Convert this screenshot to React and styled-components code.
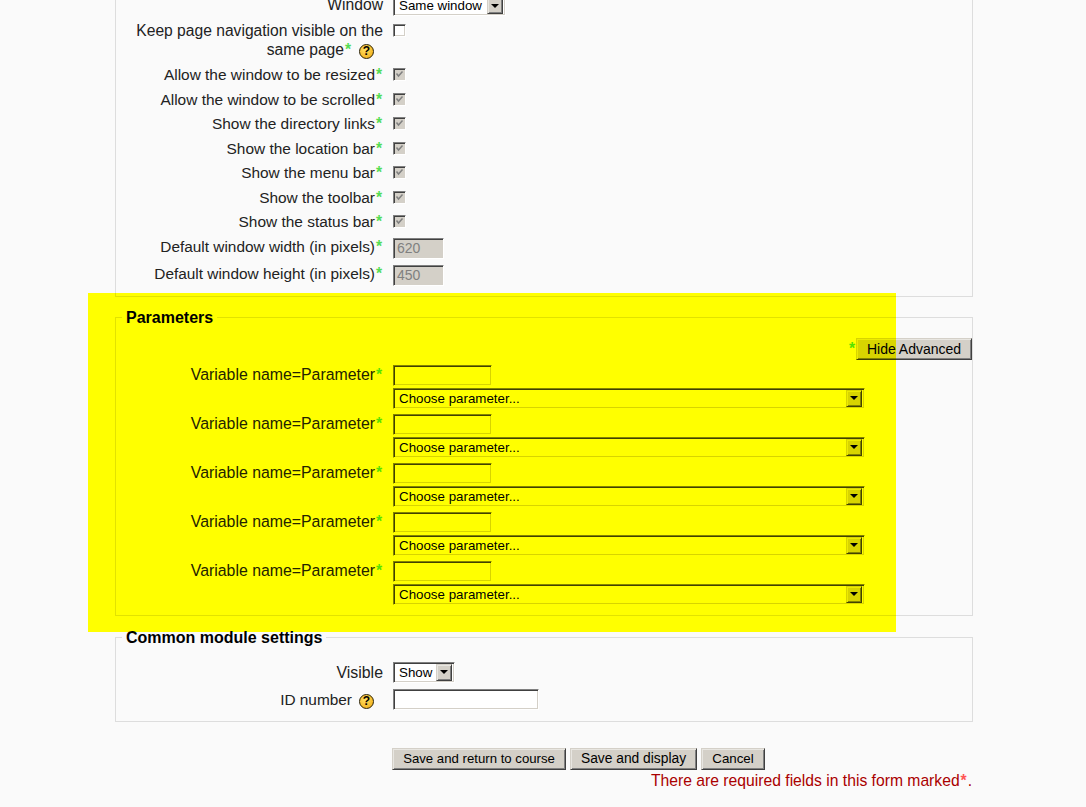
import React from 'react';
import styled, { createGlobalStyle, css } from 'styled-components';

const GlobalStyle = createGlobalStyle`
  html, body {
    margin: 0;
    padding: 0;
    background: #fafafa;
  }
  body {
    font-family: "Liberation Sans", Arial, sans-serif;
    font-size: 15.7px;
    line-height: 19px;
    color: #222;
  }
`;

const sunken = css`
  border: 1px solid;
  border-color: #808080 #fff #fff #808080;
  box-shadow: inset 1px 1px 0 #404040, inset -1px -1px 0 #d4d0c8;
`;

const raised = css`
  border: 1px solid;
  border-color: #d4d0c8 #404040 #404040 #d4d0c8;
  box-shadow: inset 1px 1px 0 #e8e6e1, inset -1px -1px 0 #808080;
  background: #d4d0c8;
`;

const Page = styled.div`
  position: relative;
  height: 807px;
  overflow: hidden;
`;

const highlightBox = css`
  position: absolute;
  left: 88px;
  top: 293px;
  width: 808px;
  height: 339px;
  pointer-events: none;
`;

/* lifts the off-white page to pure white so the marker comes out as pure yellow */
const HighlightLift = styled.div`
  ${highlightBox}
  backdrop-filter: brightness(1.0204);
`;

const Highlight = styled.div`
  ${highlightBox}
  background: #ffff00;
  mix-blend-mode: multiply;
`;

const Form = styled.form`
  width: 858px;
  margin: 0 0 0 115px;
`;

const Fieldset = styled.fieldset`
  margin: ${p => p.$margin || '0'};
  padding: ${p => p.$padding || '0'};
  border: 1px solid #dddddd;
  min-width: 0;
`;

const Legend = styled.legend`
  margin-left: 6px;
  padding: 0 4px;
  font-size: 16px;
  font-weight: bold;
  color: #000;
`;

const Row = styled.div`
  display: grid;
  grid-template-columns: 257px 1fr;
  column-gap: 10px;
  padding-left: 10px;
  height: ${p => p.$height}px;
`;

const Label = styled.label`
  text-align: right;
  padding-top: ${p => p.$top || 0}px;
  font-size: ${p => p.$size || 15.7}px;
`;

const Star = styled.span`
  display: inline-block;
  width: 8px;
  text-align: center;
  color: #55dd55;
  font-size: 15.7px;
  font-weight: bold;
`;

const Help = styled.span`
  display: inline-block;
  box-sizing: border-box;
  width: 15px;
  height: 15px;
  margin: 0 9px 0 7px;
  border: 1px solid #2a2000;
  border-radius: 50%;
  background: radial-gradient(circle at 40% 35%, #ffdf60, #f0a810);
  color: #000;
  font-size: 12px;
  font-weight: bold;
  line-height: 13px;
  text-align: center;
  vertical-align: 0;
`;

const Field = styled.div`
  display: flex;
  flex-direction: column;
  align-items: flex-start;
  gap: 2px;
  padding-top: ${p => p.$top || 0}px;
`;

const TextInput = styled.input`
  ${sunken}
  box-sizing: border-box;
  display: block;
  width: ${p => p.$width}px;
  height: ${p => p.$height || 21}px;
  padding: 1px 3px;
  outline: none;
  border-radius: 0;
  background: ${p => (p.disabled ? '#d4d0c8' : '#fff')};
  color: #808080;
  font: 14px "Liberation Sans", Arial, sans-serif;
`;

const Select = styled.div`
  ${sunken}
  box-sizing: border-box;
  display: flex;
  align-items: center;
  justify-content: space-between;
  width: ${p => p.$width}px;
  height: 21px;
  padding: 0 2px 0 5px;
  background: #fff;
  color: #000;
  font-size: 13.33px;
`;

const SelectArrow = styled.span`
  ${raised}
  box-sizing: border-box;
  display: flex;
  align-items: center;
  justify-content: center;
  width: 16px;
  height: 17px;

  &::after {
    content: '';
    border: 4px solid transparent;
    border-top: 4px solid #000;
    border-bottom: 0;
  }
`;

const Box = styled.span`
  ${sunken}
  box-sizing: border-box;
  display: block;
  width: 13px;
  height: 13px;
  margin-top: ${p => p.$top || 0}px;
  background: ${p => (p.$disabled ? '#d4d0c8' : '#fff')};

  svg {
    display: block;
    margin: 1px 0 0 1px;
  }
`;

const Button = styled.button`
  ${raised}
  box-sizing: border-box;
  width: ${p => p.$width}px;
  height: 22px;
  padding: 0;
  border-radius: 0;
  color: #000;
  font: ${p => p.$size || 13.33}px "Liberation Sans", Arial, sans-serif;
  white-space: nowrap;
`;

const AdvancedBar = styled.div`
  display: flex;
  justify-content: flex-end;
  align-items: center;
  margin: 11px 0 4px;
`;

const Actions = styled.div`
  display: flex;
  gap: 4px;
  margin: 26px 0 0 277px;
`;

const RequiredNote = styled.div`
  text-align: right;
  color: #aa0000;
  margin-top: 1.5px;
  padding-right: 1px;

  ${Star} {
    color: #ff5555;
  }
`;

const Spacer = styled.div`
  height: ${p => p.$height}px;
`;

const CheckBox = ({ checked, top }) => (
  <Box $disabled={checked} $top={top}>
    {checked && (
      <svg width="9" height="9" viewBox="0 0 9 9">
        <path d="M1.5 3.5 L3.5 6 L7.5 1.5" fill="none" stroke="#808080" strokeWidth="1.5" />
      </svg>
    )}
  </Box>
);

const checkRows = [
  'Allow the window to be resized',
  'Allow the window to be scrolled',
  'Show the directory links',
  'Show the location bar',
  'Show the menu bar',
  'Show the toolbar',
  'Show the status bar',
];

const params = [1, 2, 3, 4, 5];

export default function App() {
  return (
    <Page>
      <GlobalStyle />
      <Form onSubmit={e => e.preventDefault()}>
        <Fieldset $margin="-31px 0 0" $padding="25px 0 0">
          <Row $height={26}>
            <Label>Window</Label>
            <Field>
              <Select $width={113}>
                Same window
                <SelectArrow />
              </Select>
            </Field>
          </Row>
          <Row $height={44}>
            <Label $size={15.64}>
              Keep page navigation visible on the same page<Star>*</Star>
              <Help>?</Help>
            </Label>
            <Field $top={3}>
              <CheckBox />
            </Field>
          </Row>
          {checkRows.map(text => (
            <Row $height={24.5} key={text}>
              <Label $size={15.45}>
                {text}
                <Star>*</Star>
              </Label>
              <Field $top={3}>
                <CheckBox checked />
              </Field>
            </Row>
          ))}
          <Row $height={27}>
            <Label $size={15.4}>
              Default window width (in pixels)<Star>*</Star>
            </Label>
            <Field $top={1}>
              <TextInput $width={51} disabled value="620" readOnly />
            </Field>
          </Row>
          <Row $height={32}>
            <Label $size={15.4}>
              Default window height (in pixels)<Star>*</Star>
            </Label>
            <Field $top={1}>
              <TextInput $width={51} disabled value="450" readOnly />
            </Field>
          </Row>
        </Fieldset>

        <Fieldset $margin="11px 0 0">
          <Legend>Parameters</Legend>
          <AdvancedBar>
            <Star>*</Star>
            <Button $width={116} $size={14}>Hide Advanced</Button>
          </AdvancedBar>
          {params.map(n => (
            <Row $height={49} key={n}>
              <Label $top={1} $size={15.85}>
                Variable name=Parameter<Star>*</Star>
              </Label>
              <Field $top={1}>
                <TextInput $width={99} readOnly />
                <Select $width={472}>
                  Choose parameter...
                  <SelectArrow />
                </Select>
              </Field>
            </Row>
          ))}
          <Spacer $height={6} />
        </Fieldset>

        <Fieldset $margin="12px 0 0">
          <Legend>Common module settings</Legend>
          <Spacer $height={15} />
          <Row $height={27}>
            <Label $top={1} $size={15.9}>Visible</Label>
            <Field>
              <Select $width={62}>
                Show
                <SelectArrow />
              </Select>
            </Field>
          </Row>
          <Row $height={32}>
            <Label $top={1} $size={15.4}>
              ID number<Help>?</Help>
            </Label>
            <Field>
              <TextInput $width={146} readOnly />
            </Field>
          </Row>
        </Fieldset>

        <Actions>
          <Button $width={174} $size={13.2}>Save and return to course</Button>
          <Button $width={127} $size={13.8}>Save and display</Button>
          <Button $width={64}>Cancel</Button>
        </Actions>
        <RequiredNote>
          There are required fields in this form marked<Star>*</Star>.
        </RequiredNote>
      </Form>
      <HighlightLift />
      <Highlight />
    </Page>
  );
}
